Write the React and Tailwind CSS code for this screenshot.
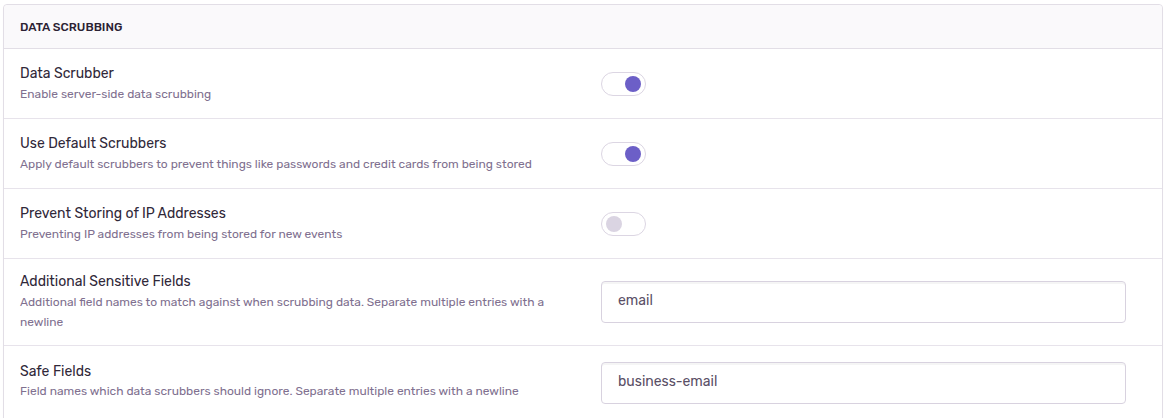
import React from 'react';

const rows = [
  { label: 'Data Scrubber', help: 'Enable server-side data scrubbing', type: 'toggle', on: true },
  {
    label: 'Use Default Scrubbers',
    help: 'Apply default scrubbers to prevent things like passwords and credit cards from being stored',
    type: 'toggle',
    on: true,
  },
  {
    label: 'Prevent Storing of IP Addresses',
    help: 'Preventing IP addresses from being stored for new events',
    type: 'toggle',
    on: false,
  },
  {
    label: 'Additional Sensitive Fields',
    help: 'Additional field names to match against when scrubbing data. Separate multiple entries with a newline',
    type: 'text',
    value: 'email',
  },
  {
    label: 'Safe Fields',
    help: 'Field names which data scrubbers should ignore. Separate multiple entries with a newline',
    type: 'text',
    value: 'business-email',
    top: true,
  },
];

const Toggle = ({ on }) => (
  <div className="w-[45px] h-[24px] rounded-full border border-[#dcd6e3] bg-white flex items-center px-[4px]">
    <div
      className={`w-[16px] h-[16px] rounded-full ${
        on ? 'bg-[#6c5fc7] ml-auto' : 'bg-[#dad4e2]'
      }`}
    />
  </div>
);

const App = () => {
  return (
    <div className="w-[1166px] h-[418px] bg-white pt-[4px] pl-[3px] overflow-hidden font-['Rubik','Open_Sans',sans-serif]">
      <div className="w-[1160px] border border-[#e2dee6] rounded-[4px] bg-white shadow-[0_1px_1px_rgba(0,0,0,0.04)]">
        <div className="h-[44px] flex items-center px-4 bg-[#faf9fb] border-b border-[#e2dee6] rounded-t-[4px]">
          <h3 className="text-[12px] font-medium uppercase text-[#2b2233]">Data Scrubbing</h3>
        </div>
        {rows.map((row, idx) => (
          <div
            key={row.label}
            className={`flex px-4 ${
              row.top ? 'items-start pt-[16px] h-[100px]' : row.type === 'text' ? 'items-center h-[87px]' : 'items-center h-[70px]'
            } ${idx < rows.length - 1 ? 'border-b border-[#e7e3eb]' : ''}`}
          >
            <div className="w-[581px] pr-[40px] shrink-0 pt-[1px]">
              <div className="text-[14px] leading-[18px] text-[#302839]">{row.label}</div>
              <div className={`${row.top ? 'mt-0' : 'mt-[1px]'} text-[12px] leading-[20px] text-[#80708f]`}>{row.help}</div>
            </div>
            <div className="flex-1 pr-[20px]">
              {row.type === 'toggle' ? (
                <Toggle on={row.on} />
              ) : (
                <div className="h-[42px] rounded-[4px] border border-[#d8d2df] shadow-[inset_0_2px_0_rgba(0,0,0,0.04)] flex items-center px-4 pb-[3px] text-[14px] text-[#5a4f66]">
                  {row.value}
                </div>
              )}
            </div>
          </div>
        ))}
      </div>
    </div>
  );
};

export default App;
